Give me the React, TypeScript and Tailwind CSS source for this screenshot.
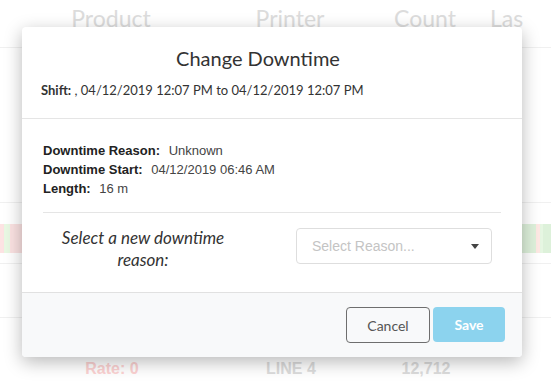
const lato = { fontFamily: 'Lato, "Open Sans", sans-serif' }
const arial = { fontFamily: '"Liberation Sans", Arial, sans-serif' }

function BackgroundTable() {
  return (
    <div className="w-[551px] h-[387px] bg-white overflow-hidden text-[#dcdcdc]" style={lato}>
      {/* header */}
      <div className="h-[48px] border-b border-[#f0f0f0] flex items-end pb-[15px] text-[23px] leading-[28px]">
        <div className="w-[222px] text-center">Product</div>
        <div className="w-[136px] text-center">Printer</div>
        <div className="w-[134px] text-center">Count</div>
        <div className="-ml-[2px]">Las</div>
      </div>
      <div className="h-[155px] border-b border-[#f0f0f0]" />
      <div className="h-[61px] border-b border-[#f0f0f0] pt-[21px]">
        <div className="w-full h-[29px] flex">
          <div className="w-[4px] bg-[#fde3e3]" />
          <div className="w-[6px] bg-[#e9f8e3]" />
          <div className="w-[240px] bg-[#fbe2e2]" />
          <div className="flex-1 bg-[#def1db]" />
          <div className="w-[4px] bg-[#fde8e3]" />
          <div className="w-[3px] bg-[#e6f6e2]" />
          <div className="w-[8px] bg-[#ddf1da]" />
        </div>
      </div>
      <div className="h-[54px] border-b border-[#f0f0f0]" />
      <div className="h-[69px] flex items-end pb-[6px] font-bold text-[16px]" style={arial}>
        <div className="w-[224px] text-center text-[#fcd2d2]">Rate: 0</div>
        <div className="w-[134px] text-center">LINE 4</div>
        <div className="w-[136px] text-center">12,712</div>
      </div>
    </div>
  )
}

function Modal() {
  return (
    <div className="absolute left-[22px] top-[27px] w-[500px] h-[330px] bg-white rounded-[4px] shadow-[0_5px_18px_rgba(0,0,0,0.28)] flex flex-col overflow-hidden">
      <div className="pt-[17px] pb-[19px] px-[19px] border-b border-[#e5e5e5]" style={lato}>
        <h2 className="text-center text-[20px] leading-[28px] text-[#333] pr-[28px]">Change Downtime</h2>
        <p className="mt-[9px] text-[13px] leading-[18px] text-[#333]">
          <span className="font-bold">Shift:</span> , 04/12/2019 12:07 PM to 04/12/2019 12:07 PM
        </p>
      </div>

      <div className="px-[21px] pt-[22px] flex-1" style={arial}>
        <div className="text-[13px] leading-[19px] text-[#444]">
          <div><span className="font-bold text-[#222] pr-[5px]">Downtime Reason:</span> Unknown</div>
          <div><span className="font-bold text-[#222] pr-[5px]">Downtime Start:</span> 04/12/2019 06:46 AM</div>
          <div><span className="font-bold text-[#222] pr-[5px]">Length:</span> 16 m</div>
        </div>
        <div className="mt-[14px] border-t border-[#e5e5e5]" />
        <div className="flex items-start pt-[14px]">
          <div className="w-[200px] text-center italic text-[17px] leading-[22px] text-[#333]" style={lato}>
            Select a new downtime reason:
          </div>
          <button className="ml-[53px] mt-[1px] w-[196px] h-[36px] border border-[#dedede] rounded-[4px] flex items-center justify-between pl-[15px] pr-[12px] text-[14px] text-[#c4c4c4]">
            <span>Select Reason...</span>
            <span className="w-0 h-0 border-l-[4px] border-r-[4px] border-t-[5px] border-l-transparent border-r-transparent border-t-[#444]" />
          </button>
        </div>
      </div>

      <div className="h-[65px] bg-[#f8f9fa] border-t border-[#e1e1e1] flex justify-end items-start pt-[14px] pr-[17px] gap-[3px]" style={lato}>
        <button className="w-[84px] h-[36px] border border-[#6e6e6e] rounded-[4px] text-[14px] text-[#555]">Cancel</button>
        <button className="w-[72px] h-[35px] bg-[#8cd3ee] rounded-[4px] text-[14px] font-bold text-white">Save</button>
      </div>
    </div>
  )
}

export default function App() {
  return (
    <div className="relative w-[551px] h-[387px] overflow-hidden">
      <BackgroundTable />
      <Modal />
    </div>
  )
}
